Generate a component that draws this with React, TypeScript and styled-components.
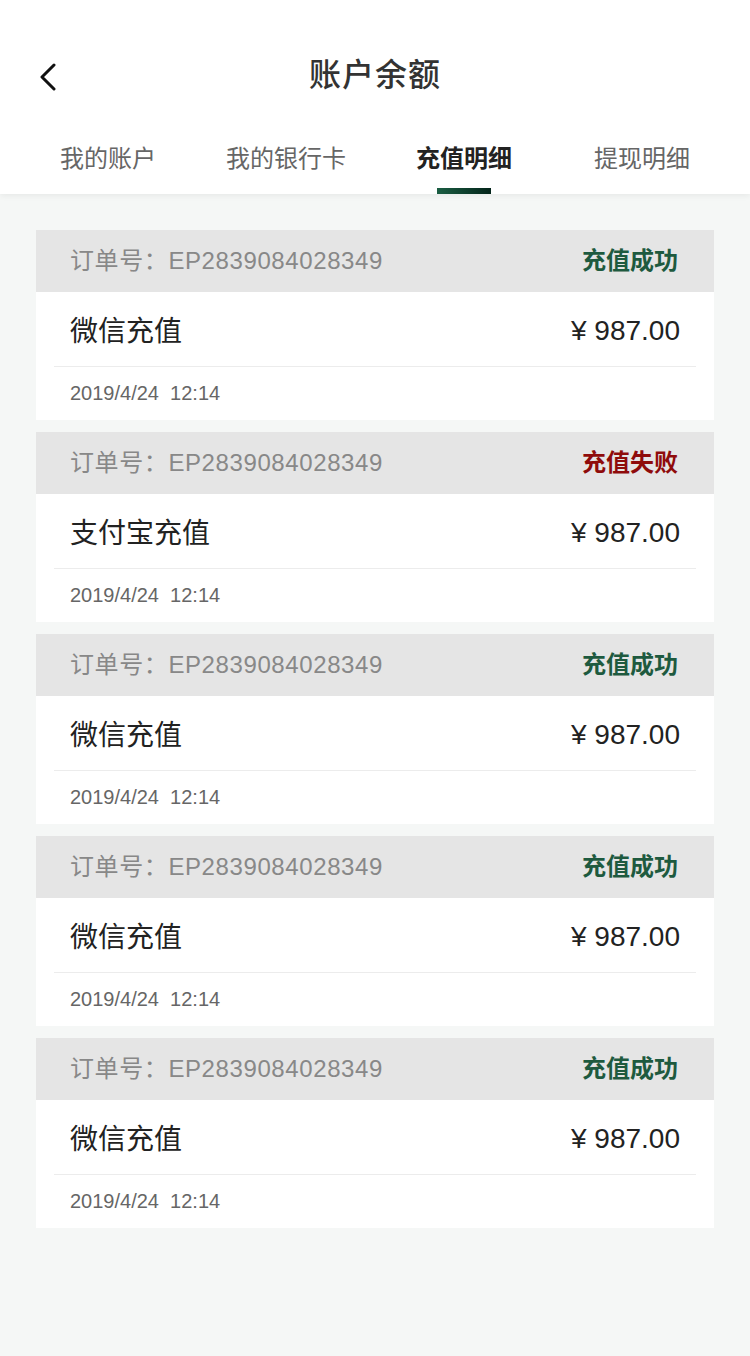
import React from "react";
import styled, { createGlobalStyle } from "styled-components";

const Global = createGlobalStyle`
  html, body { margin: 0; padding: 0; background: #f5f7f6; }
  body { font-family: "Liberation Sans", "Noto Sans CJK SC", sans-serif; }
  * { box-sizing: border-box; }
`;

const Page = styled.div`
  min-height: 1356px;
  background: #f5f7f6;
`;

const Header = styled.header`
  background: #fff;
  padding-top: 40px;
  box-shadow: 0 2px 6px rgba(0, 0, 0, 0.06);
  position: relative;
  z-index: 1;
`;

const NavBar = styled.div`
  height: 70px;
  display: flex;
  align-items: center;
  justify-content: center;
  position: relative;
`;

const Back = styled.button`
  position: absolute;
  left: 36px;
  top: 22px;
  width: 24px;
  height: 30px;
  padding: 0;
  border: 0;
  background: none;
  display: flex;
  align-items: center;
  justify-content: center;
`;

const Title = styled.h1`
  margin: 0;
  font-size: 32px;
  line-height: 40px;
  font-weight: 500;
  color: #333;
  letter-spacing: 1px;
`;

const Tabs = styled.nav`
  display: flex;
  padding: 0 19px;
`;

const Tab = styled.div<{ $active?: boolean }>`
  flex: 1;
  display: flex;
  flex-direction: column;
  align-items: center;
  padding-top: 34px;
  font-size: 24px;
  line-height: 30px;
  color: ${(p) => (p.$active ? "#222" : "#666")};
  font-weight: ${(p) => (p.$active ? 700 : 400)};
`;

const Indicator = styled.div<{ $active?: boolean }>`
  margin-top: 14px;
  width: 54px;
  height: 6px;
  background: ${(p) =>
    p.$active ? "linear-gradient(90deg, #1b5e43, #03241a)" : "transparent"};
`;

const List = styled.main`
  padding: 36px 36px 0;
  display: flex;
  flex-direction: column;
  gap: 12px;
`;

const Card = styled.section`
  background: #fff;
`;

const CardHead = styled.div`
  height: 62px;
  background: #e5e5e5;
  display: flex;
  align-items: center;
  justify-content: space-between;
  padding: 0 36px 0 34px;
`;

const OrderNo = styled.span`
  font-size: 24px;
  line-height: 30px;
  color: #888;
  letter-spacing: 0.6px;
`;

const Status = styled.span<{ $ok: boolean }>`
  font-size: 24px;
  line-height: 30px;
  font-weight: 700;
  color: ${(p) => (p.$ok ? "#1e5a3f" : "#8f0b0b")};
`;

const CardBody = styled.div`
  padding: 0 18px;
`;

const MainRow = styled.div`
  height: 75px;
  display: flex;
  align-items: center;
  justify-content: space-between;
  padding: 0 16px;
  border-bottom: 1px solid #ececec;
`;

const Method = styled.span`
  font-size: 28px;
  color: #222;
`;

const Amount = styled.span`
  font-size: 28px;
  color: #222;
  padding-top: 3px;
  white-space: pre;
`;

const DateRow = styled.div`
  height: 53px;
  display: flex;
  align-items: center;
  padding: 0 16px;
  font-size: 20px;
  color: #666;
  white-space: pre;
`;

const records = [
  { method: "微信充值", ok: true },
  { method: "支付宝充值", ok: false },
  { method: "微信充值", ok: true },
  { method: "微信充值", ok: true },
  { method: "微信充值", ok: true },
];

const tabs = ["我的账户", "我的银行卡", "充值明细", "提现明细"];

export default function App() {
  return (
    <Page>
      <Global />
      <Header>
        <NavBar>
          <Back aria-label="返回">
            <svg width="20" height="28" viewBox="0 0 20 28">
              <path d="M16 2 L4 14 L16 26" fill="none" stroke="#111" strokeWidth="3" strokeLinecap="round" strokeLinejoin="round" />
            </svg>
          </Back>
          <Title>账户余额</Title>
        </NavBar>
        <Tabs>
          {tabs.map((t, i) => (
            <Tab key={t} $active={i === 2}>
              {t}
              <Indicator $active={i === 2} />
            </Tab>
          ))}
        </Tabs>
      </Header>
      <List>
        {records.map((r, i) => (
          <Card key={i}>
            <CardHead>
              <OrderNo>订单号：EP2839084028349</OrderNo>
              <Status $ok={r.ok}>{r.ok ? "充值成功" : "充值失败"}</Status>
            </CardHead>
            <CardBody>
              <MainRow>
                <Method>{r.method}</Method>
                <Amount>{"¥ 987.00"}</Amount>
              </MainRow>
              <DateRow>{"2019/4/24  12:14"}</DateRow>
            </CardBody>
          </Card>
        ))}
      </List>
    </Page>
  );
}
